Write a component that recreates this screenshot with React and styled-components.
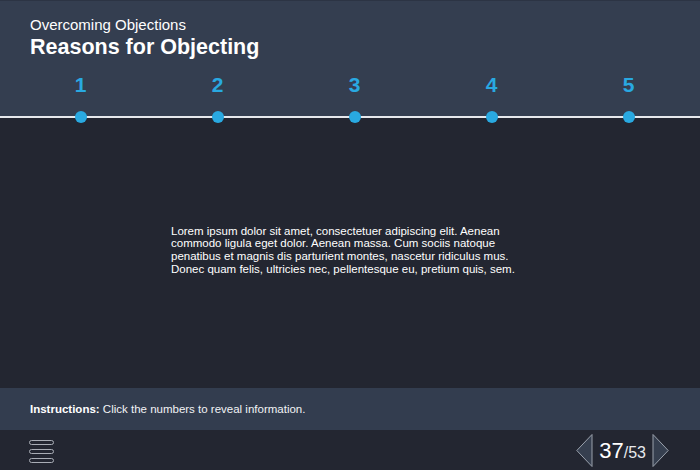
import React from 'react';
import styled, { createGlobalStyle } from 'styled-components';

const GlobalStyle = createGlobalStyle`
  html, body {
    margin: 0;
    padding: 0;
    background: #232631;
  }
  body {
    font-family: "Liberation Sans", Arial, sans-serif;
  }
`;

const Page = styled.div`
  width: 700px;
  height: 470px;
  display: flex;
  flex-direction: column;
  background: #232631;
  color: #ffffff;
  overflow: hidden;
`;

const Header = styled.header`
  height: 117px;
  box-sizing: border-box;
  background: #343e50;
  border-top: 1px solid #2c3444;
  padding-top: 15px;
  display: flex;
  flex-direction: column;
`;

const Heading = styled.div`
  padding-left: 30px;
`;

const Subtitle = styled.div`
  font-size: 15px;
  line-height: 18px;
`;

const Title = styled.h1`
  margin: 1px 0 0;
  font-size: 21.5px;
  line-height: 24px;
  font-weight: bold;
`;

const Steps = styled.div`
  position: relative;
  margin-top: auto;
  display: flex;
  padding-left: 12px;

  &::after {
    content: '';
    position: absolute;
    left: 0;
    right: 0;
    bottom: -1px;
    height: 2px;
    background: #e6e8ec;
  }
`;

const Step = styled.button`
  flex: 0 0 137px;
  display: flex;
  flex-direction: column;
  align-items: center;
  background: none;
  border: 0;
  padding: 0;
  cursor: pointer;
  font-family: inherit;
`;

const StepNumber = styled.span`
  font-size: 21px;
  line-height: 24px;
  font-weight: bold;
  color: #29a9e1;
`;

const Dot = styled.span`
  position: relative;
  z-index: 1;
  width: 12px;
  height: 12px;
  border-radius: 50%;
  background: #29a9e1;
  margin-top: 14px;
  margin-bottom: -6px;
`;

const Main = styled.main`
  flex: 1;
  display: flex;
  align-items: center;
  padding-left: 171px;
  padding-bottom: 5px;
`;

const Body = styled.p`
  margin: 0;
  width: 360px;
  font-size: 11.5px;
  line-height: 12.7px;
  color: #ffffff;
`;

const InstructionBar = styled.div`
  height: 42px;
  background: #333d4f;
  display: flex;
  align-items: center;
  padding-left: 30px;
  font-size: 11.5px;
  color: #f2f3f5;

  b {
    color: #ffffff;
  }
`;

const Footer = styled.footer`
  height: 40px;
  display: flex;
  align-items: center;
  justify-content: space-between;
  padding: 0 31px 0 29px;
  background: #232631;
`;

const MenuButton = styled.button`
  display: flex;
  flex-direction: column;
  gap: 4px;
  background: none;
  border: 0;
  padding: 0;
  margin-top: 2px;
  cursor: pointer;
`;

const MenuBar = styled.span`
  width: 23px;
  height: 3px;
  border: 1px solid #a9adb6;
  border-radius: 3px;
`;

const Pager = styled.div`
  display: flex;
  align-items: center;
  gap: 6px;
`;

const Arrow = styled.button`
  background: none;
  border: 0;
  padding: 0;
  display: flex;
  cursor: pointer;
`;

const Count = styled.div`
  display: flex;
  align-items: baseline;
  padding-top: 2px;
`;

const Current = styled.span`
  font-size: 22px;
  color: #ffffff;
`;

const Total = styled.span`
  font-size: 16px;
  color: #e8eaee;
`;

const ArrowIcon = ({ dir }) => (
  <svg width="17" height="33" viewBox="0 0 17 33">
    {dir === 'left' ? (
      <polygon points="16,0.5 16,32.5 0.8,16.5" fill="#363f4f" stroke="#9aa1ac" strokeWidth="1" />
    ) : (
      <polygon points="1,0.5 1,32.5 16.2,16.5" fill="#363f4f" stroke="#9aa1ac" strokeWidth="1" />
    )}
  </svg>
);

const steps = [1, 2, 3, 4, 5];

export default function App() {
  return (
    <>
      <GlobalStyle />
      <Page>
        <Header>
          <Heading>
            <Subtitle>Overcoming Objections</Subtitle>
            <Title>Reasons for Objecting</Title>
          </Heading>
          <Steps>
            {steps.map((n) => (
              <Step key={n}>
                <StepNumber>{n}</StepNumber>
                <Dot />
              </Step>
            ))}
          </Steps>
        </Header>
        <Main>
          <Body>
            Lorem ipsum dolor sit amet, consectetuer adipiscing elit. Aenean commodo ligula eget dolor.
            Aenean massa. Cum sociis natoque penatibus et magnis dis parturient montes, nascetur
            ridiculus mus. Donec quam felis, ultricies nec, pellentesque eu, pretium quis, sem.
          </Body>
        </Main>
        <InstructionBar>
          <span>
            <b>Instructions:</b> Click the numbers to reveal information.
          </span>
        </InstructionBar>
        <Footer>
          <MenuButton aria-label="Menu">
            <MenuBar />
            <MenuBar />
            <MenuBar />
          </MenuButton>
          <Pager>
            <Arrow aria-label="Previous">
              <ArrowIcon dir="left" />
            </Arrow>
            <Count>
              <Current>37</Current>
              <Total>/53</Total>
            </Count>
            <Arrow aria-label="Next">
              <ArrowIcon dir="right" />
            </Arrow>
          </Pager>
        </Footer>
      </Page>
    </>
  );
}
